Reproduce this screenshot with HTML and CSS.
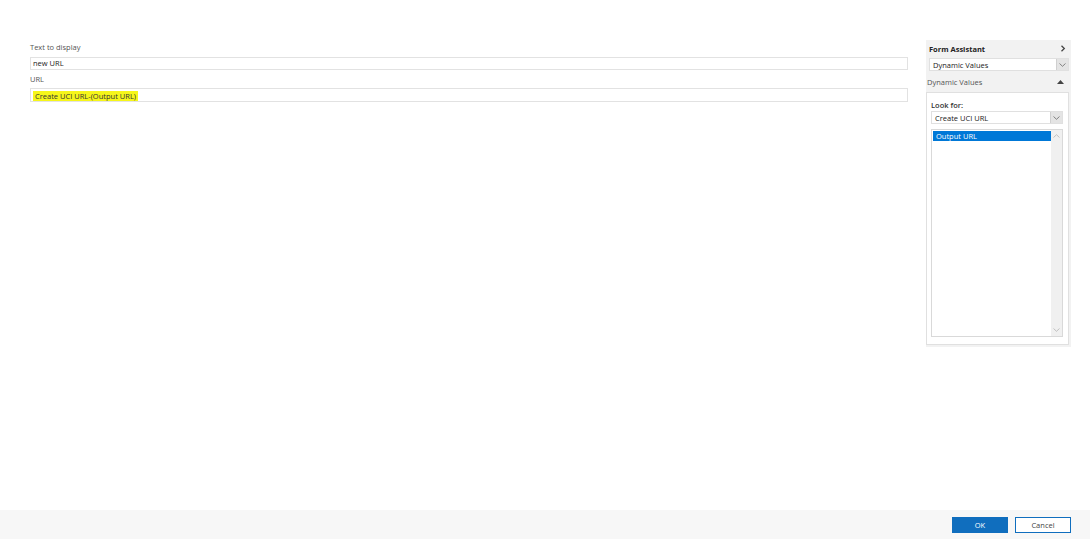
FILE: index.html
```html
<!DOCTYPE html>
<html lang="en">
<head>
  <meta charset="UTF-8" />
  <title>Insert Hyperlink</title>
  <link rel="stylesheet" href="styles.css">
</head>
<body>
  <div class="page">
    <div class="content">
      <!-- Hyperlink fields -->
      <div class="fields">
        <label class="field-label">Text to display</label>
        <div class="text-box">new URL</div>
        <label class="field-label">URL</label>
        <div class="text-box url-box"><span class="token">Create UCI URL-(Output URL)</span></div>
      </div>

      <!-- Form Assistant -->
      <div class="assistant">
        <div class="assistant-head">
          <span class="assistant-title">Form Assistant</span>
          <svg class="chev-right" width="6" height="7" viewBox="0 0 6 7"><path d="M1.5 0.8 L4.3 3.5 L1.5 6.2" fill="none" stroke="#444" stroke-width="1.3"/></svg>
        </div>
        <div class="combo combo-top">
          <span>Dynamic Values</span>
          <span class="combo-btn"><svg width="7" height="4" viewBox="0 0 7 4"><path d="M0.5 0.5 L3.5 3.3 L6.5 0.5" fill="none" stroke="#777" stroke-width="0.9"/></svg></span>
        </div>
        <div class="section-head">
          <span>Dynamic Values</span>
          <svg width="7" height="4" viewBox="0 0 7 4"><path d="M0 4 L3.5 0 L7 4 Z" fill="#444"/></svg>
        </div>
        <div class="section-body">
          <div class="look-label">Look for:</div>
          <div class="combo">
            <span>Create UCI URL</span>
            <span class="combo-btn"><svg width="7" height="4" viewBox="0 0 7 4"><path d="M0.5 0.5 L3.5 3.3 L6.5 0.5" fill="none" stroke="#777" stroke-width="0.9"/></svg></span>
          </div>
          <div class="listbox">
            <div class="list-items">
              <div class="list-item selected">Output URL</div>
            </div>
            <div class="scrollbar">
              <svg width="7" height="4" viewBox="0 0 7 4"><path d="M0.5 3.5 L3.5 0.7 L6.5 3.5" fill="none" stroke="#bbb" stroke-width="0.9"/></svg>
              <svg width="7" height="4" viewBox="0 0 7 4"><path d="M0.5 0.5 L3.5 3.3 L6.5 0.5" fill="none" stroke="#bbb" stroke-width="0.9"/></svg>
            </div>
          </div>
        </div>
      </div>
    </div>

    <!-- Dialog buttons -->
    <div class="footer">
      <button class="btn btn-ok">OK</button>
      <button class="btn btn-cancel">Cancel</button>
    </div>
  </div>
</body>
</html>
```

FILE: styles.css
```css
/* Base */
body {
  margin: 0;
  background: #fff;
  font-family: "Open Sans", "Noto Sans", Arial, sans-serif;
  font-size: 7.5px;
  color: #333;
}

.page {
  height: 539px;
  display: flex;
  flex-direction: column;
}

.content {
  flex: 1;
  display: flex;
  padding: 40px 19px 0 30px;
  gap: 18px;
}

/* Left fields */
.fields {
  width: 878px;
  padding-top: 2px;
}
.field-label {
  display: block;
  height: 11px;
  line-height: 11px;
  margin-bottom: 4px;
  color: #555;
}
.text-box {
  box-sizing: border-box;
  height: 13px;
  line-height: 11px;
  border: 1px solid #e2e2e2;
  padding: 0 2px;
  color: #222;
  margin-bottom: 4px;
}
.text-box + .field-label {
  margin-bottom: 3px;
}
.url-box {
  height: 14px;
  line-height: 12px;
  padding: 1px 2px;
}
.token {
  display: inline-block;
  background: #f6f61a;
  line-height: 10px;
  padding: 0 2px;
  color: #333;
}

/* Form Assistant panel */
.assistant {
  width: 145px;
  height: 307px;
  background: #f2f2f2;
  box-sizing: border-box;
  padding: 0 2px 2px 0;
  display: flex;
  flex-direction: column;
}
.assistant-head {
  height: 17px;
  display: flex;
  align-items: center;
  justify-content: space-between;
  padding: 0 3px 0 3px;
}
.assistant-title {
  font-weight: bold;
  color: #222;
}
.combo {
  box-sizing: border-box;
  height: 13px;
  background: #fff;
  border: 1px solid #e0e0e0;
  display: flex;
  align-items: center;
  justify-content: space-between;
  padding-left: 3px;
  color: #222;
}
.combo-top {
  margin: 1px 0 0 3px;
}
.combo-btn {
  width: 11px;
  height: 11px;
  background: #e4e4e4;
  border-left: 1px solid #d0d0d0;
  display: flex;
  align-items: center;
  justify-content: center;
}
.section-head {
  height: 21px;
  display: flex;
  align-items: center;
  justify-content: space-between;
  padding: 0 5px 0 1px;
  color: #555;
}
.section-body {
  flex: 1;
  background: #fff;
  border: 1px solid #e0e0e0;
  padding: 7px 5px 7px 4px;
  display: flex;
  flex-direction: column;
}
.look-label {
  font-weight: 600;
  color: #333;
  height: 10px;
  line-height: 10px;
  margin-bottom: 1px;
}
.listbox {
  flex: 1;
  margin-top: 5px;
  border: 1px solid #d9d9d9;
  display: flex;
}
.list-items {
  flex: 1;
  padding: 1px 0 0 1px;
}
.list-item {
  height: 10px;
  line-height: 10px;
  padding-left: 3px;
}
.list-item.selected {
  background: #0078d7;
  color: #fff;
}
.scrollbar {
  width: 11px;
  background: #f0f0f0;
  display: flex;
  flex-direction: column;
  align-items: center;
  justify-content: space-between;
  padding: 4px 0;
}

/* Footer */
.footer {
  height: 29px;
  background: #f7f7f7;
  display: flex;
  align-items: center;
  justify-content: flex-end;
  gap: 7px;
  padding-right: 19px;
}
.btn {
  width: 56px;
  height: 16px;
  font-family: inherit;
  font-size: 7.5px;
  padding: 0;
  cursor: pointer;
}
.btn-ok {
  background: #106ebe;
  border: 1px solid #106ebe;
  color: #fff;
}
.btn-cancel {
  background: #fff;
  border: 1px solid #106ebe;
  color: #444;
}
```
